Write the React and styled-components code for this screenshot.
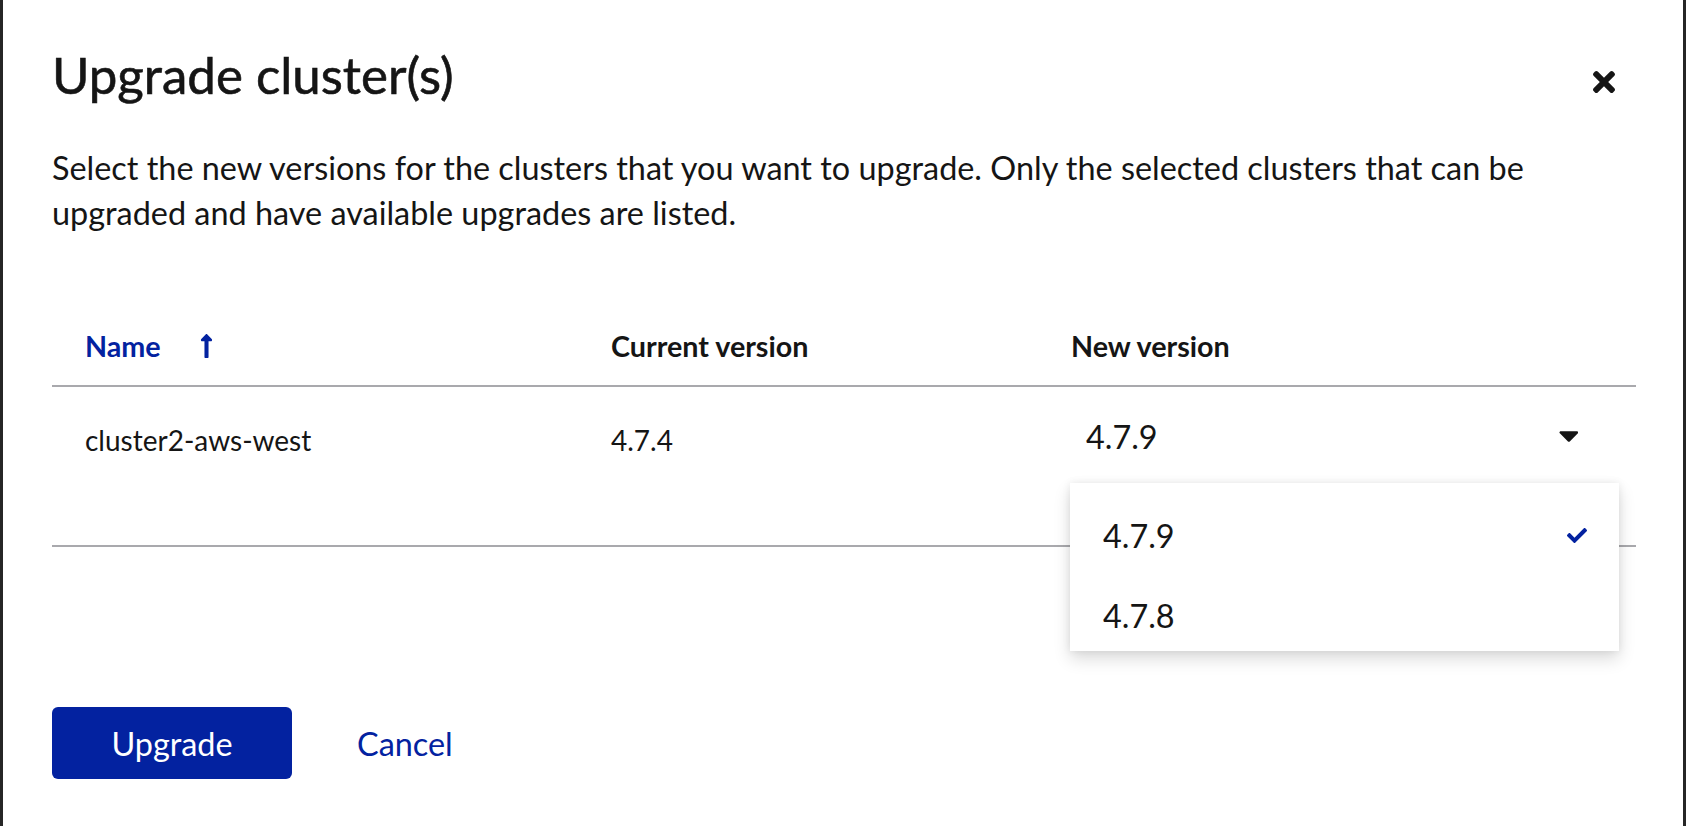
import React from "react";
import styled, { createGlobalStyle } from "styled-components";

const BLUE = "#0322a0";
const TEXT = "#151515";

const Global = createGlobalStyle`
  html, body { margin: 0; padding: 0; }
  body {
    background: #262626;
    font-family: "Lato", "Noto Sans", sans-serif;
    color: ${TEXT};
  }
  * { box-sizing: border-box; }
`;

const Modal = styled.div`
  margin: 0 3px;
  min-height: 826px;
  background: #ffffff;
  padding: 42px 47px 0 49px;
  display: flex;
  flex-direction: column;
`;

const Header = styled.header`
  display: flex;
  align-items: flex-start;
  justify-content: space-between;
`;

const Title = styled.h1`
  margin: 0;
  font-size: 51px;
  line-height: 66px;
  font-weight: 400;
  color: ${TEXT};
  -webkit-text-stroke: 0.6px ${TEXT};
`;

const CloseButton = styled.button`
  margin-top: 8px;
  width: 64px;
  height: 64px;
  border: 0;
  background: transparent;
  padding: 0;
  display: flex;
  align-items: center;
  justify-content: center;
  color: ${TEXT};
  cursor: pointer;
`;

const Description = styled.p`
  margin: 31px 0 0;
  font-size: 32.4px;
  line-height: 45px;
  color: ${TEXT};
  max-width: 1520px;
`;

const Table = styled.div`
  margin-top: 58px;
  display: flex;
  flex-direction: column;
`;

const Row = styled.div`
  display: grid;
  grid-template-columns: 527px 460px 1fr;
  border-bottom: 2px solid #a9a9ad;
  align-items: start;
  height: ${(p) => (p.$head ? "auto" : "160px")};
`;

const HeadCell = styled.div`
  padding: 32px 0 18px 32px;
  font-size: 28.7px;
  line-height: 42px;
  font-weight: 700;
  color: ${(p) => (p.$active ? BLUE : TEXT)};
  display: flex;
  align-items: center;
  &:first-child { padding-left: 33px; }
`;

const SortIcon = styled.svg`
  margin-left: 39px;
  width: 13px;
  height: 24px;
  fill: ${BLUE};
`;

const Cell = styled.div`
  padding: 32px 0 0 32px;
  font-size: 28px;
  line-height: 42px;
  &:first-child { padding-left: 33px; }
`;

const SelectCell = styled.div`
  padding: 13px 0 0 31px;
  position: relative;
`;

const Toggle = styled.button`
  width: 549px;
  height: 72px;
  border: 0;
  background: transparent;
  padding: 0 41px 0 16px;
  display: flex;
  align-items: center;
  justify-content: space-between;
  font-family: inherit;
  font-size: 32.4px;
  color: ${TEXT};
  cursor: pointer;
`;

const Caret = styled.svg`
  width: 19px;
  height: 11px;
  fill: ${TEXT};
`;

const Menu = styled.ul`
  position: absolute;
  top: 96px;
  left: 31px;
  width: 549px;
  height: 168px;
  margin: 0;
  padding: 12px 0 0;
  list-style: none;
  background: #ffffff;
  overflow: hidden;
  box-shadow: 0 8px 16px 0 rgba(3, 3, 3, 0.14), 0 0 8px 0 rgba(3, 3, 3, 0.08);
  z-index: 2;
`;

const MenuItem = styled.li`
  height: 80px;
  padding: 0 33px;
  display: flex;
  align-items: center;
  justify-content: space-between;
  font-size: 32.4px;
  color: ${TEXT};
`;

const Check = styled.svg`
  width: 20px;
  height: 15px;
  fill: ${BLUE};
  margin-right: -1px;
`;

const Footer = styled.footer`
  margin-top: 160px;
  display: flex;
  align-items: center;
  gap: 33px;
`;

const PrimaryButton = styled.button`
  width: 240px;
  height: 72px;
  border: 0;
  border-radius: 6px;
  background: ${BLUE};
  color: #ffffff;
  font-family: inherit;
  font-size: 32.4px;
  cursor: pointer;
`;

const LinkButton = styled.button`
  height: 72px;
  border: 0;
  background: transparent;
  padding: 0 32px;
  color: ${BLUE};
  font-family: inherit;
  font-size: 32.4px;
  cursor: pointer;
`;

const CloseIcon = () => (
  <svg width="22" height="22" viewBox="0 80 352 352" fill="currentColor">
    <path d="M242.72 256l100.07-100.07c12.28-12.28 12.28-32.19 0-44.48l-22.24-22.24c-12.28-12.28-32.19-12.28-44.48 0L176 189.28 75.93 89.21c-12.28-12.28-32.19-12.28-44.48 0L9.21 111.45c-12.28 12.28-12.28 32.19 0 44.48L109.28 256 9.21 356.07c-12.28 12.28-12.28 32.19 0 44.48l22.24 22.24c12.280 12.28 32.2 12.28 44.48 0L176 322.72l100.07 100.07c12.28 12.28 32.2 12.28 44.48 0l22.24-22.24c12.28-12.28 12.28-32.19 0-44.48L242.72 256z" />
  </svg>
);

const versions = [
  { v: "4.7.9", selected: true },
  { v: "4.7.8", selected: false },
];

export default function App() {
  return (
    <>
      <Global />
      <Modal>
        <Header>
          <Title>Upgrade cluster(s)</Title>
          <CloseButton aria-label="Close">
            <CloseIcon />
          </CloseButton>
        </Header>
        <Description>
          Select the new versions for the clusters that you want to upgrade. Only the selected
          clusters that can be upgraded and have available upgrades are listed.
        </Description>
        <Table>
          <Row $head>
            <HeadCell $active>
              Name
              <SortIcon viewBox="0 32 256 448" preserveAspectRatio="none">
                <path d="M88 166.059V468c0 6.627 5.373 12 12 12h56c6.627 0 12-5.373 12-12V166.059h46.059c21.382 0 32.09-25.851 16.971-40.971l-86.059-86.059c-9.373-9.373-24.569-9.373-33.941 0l-86.059 86.059c-15.119 15.119-4.411 40.971 16.971 40.971H88z" />
              </SortIcon>
            </HeadCell>
            <HeadCell>Current version</HeadCell>
            <HeadCell>New version</HeadCell>
          </Row>
          <Row>
            <Cell>cluster2-aws-west</Cell>
            <Cell>4.7.4</Cell>
            <SelectCell>
              <Toggle>
                <span>4.7.9</span>
                <Caret viewBox="4 192 300 168">
                  <path d="M31.3 192h257.3c17.8 0 26.7 21.5 14.1 34.1L174.1 354.8c-7.8 7.8-20.5 7.8-28.3 0L17.2 226.1C4.6 213.5 13.5 192 31.3 192z" />
                </Caret>
              </Toggle>
              <Menu>
                {versions.map((item) => (
                  <MenuItem key={item.v}>
                    <span>{item.v}</span>
                    {item.selected && (
                      <Check viewBox="0 65 512 382">
                        <path d="M173.898 439.404l-166.4-166.4c-9.997-9.997-9.997-26.206 0-36.204l36.203-36.204c9.997-9.998 26.207-9.998 36.204 0L192 312.69 432.095 72.596c9.997-9.997 26.207-9.997 36.204 0l36.203 36.204c9.997 9.997 9.997 26.206 0 36.204l-294.4 294.401c-9.998 9.997-26.207 9.997-36.204-.001z" />
                      </Check>
                    )}
                  </MenuItem>
                ))}
              </Menu>
            </SelectCell>
          </Row>
        </Table>
        <Footer>
          <PrimaryButton>Upgrade</PrimaryButton>
          <LinkButton>Cancel</LinkButton>
        </Footer>
      </Modal>
    </>
  );
}
